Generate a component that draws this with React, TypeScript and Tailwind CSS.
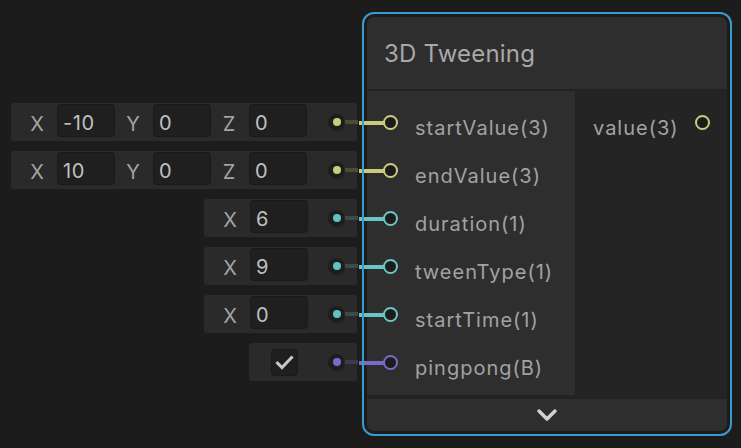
import React from "react";

type Color = { dot: string; dim: string; bright: string };
const YELLOW: Color = { dot: "bg-[#c9cd7b]", dim: "bg-[#4b4d3b]", bright: "bg-[#c9cd7b]" };
const TEAL: Color = { dot: "bg-[#62c2c3]", dim: "bg-[#394b4b]", bright: "bg-[#68c6c6]" };
const PURPLE: Color = { dot: "bg-[#7b69c9]", dim: "bg-[#3e3a4e]", bright: "bg-[#7b69c9]" };

function Dot({ c }: { c: Color }) {
  return (
    <div className="relative w-[17px] h-[17px] shrink-0">
      <div className={`absolute left-[8px] top-[6px] w-[22px] h-[4px] ${c.dim}`} />
      <div className="absolute inset-0 rounded-full bg-[#1d1d1d] flex items-center justify-center">
        <div className={`w-[8px] h-[8px] rounded-full ${c.dot}`} />
      </div>
    </div>
  );
}

function Field({ label, value }: { label: string; value: string }) {
  return (
    <div className="flex items-start w-[96px] h-full">
      <div className="w-[38px] h-full flex items-center justify-center text-[20px] text-[#a4a4a4] pt-[4px] pr-[2px]">
        {label}
      </div>
      <div className="w-[58px] h-[33px] mt-[1px] rounded-[4px] bg-[#1f1f1f] border border-[#1a1a1a] flex items-center pl-[5px] pt-[5px] text-[20px] tracking-[0.6px] text-[#c0c0c0]">
        {value}
      </div>
    </div>
  );
}

function FieldBox({ width, children, c }: { width: string; children: React.ReactNode; c: Color }) {
  return (
    <div className={`${width} h-[38px] rounded-[3px] bg-[#2a2a2a] flex items-center pl-[8px] pr-[12px]`}>
      <div className="flex h-full flex-1">{children}</div>
      <Dot c={c} />
    </div>
  );
}

function InPort({ label, c, stroke }: { label: string; c: Color; stroke: string }) {
  return (
    <div className="relative h-[48px] flex items-center pl-[16px]">
      <div className={`absolute left-[-8px] top-[22px] w-[26px] h-[4px] ${c.bright}`} />
      <div className={`relative w-[15px] h-[15px] rounded-full border-2 ${stroke} bg-[#1c1c1c] mb-[1px]`} />
      <div className="ml-[17px] pt-[9px] text-[20px] tracking-[1px] text-[#a2a2a2]">{label}</div>
    </div>
  );
}

export default function App() {
  return (
    <div className="w-[741px] h-[448px] bg-[#1c1c1c] flex overflow-hidden [font-family:Inter,'Noto_Sans',sans-serif]">
      <div className="w-[357px] shrink-0 flex flex-col items-end gap-[10px] pt-[103px]">
        <FieldBox width="w-[346px]" c={YELLOW}>
          <Field label="X" value="-10" />
          <Field label="Y" value="0" />
          <Field label="Z" value="0" />
        </FieldBox>
        <FieldBox width="w-[346px]" c={YELLOW}>
          <Field label="X" value="10" />
          <Field label="Y" value="0" />
          <Field label="Z" value="0" />
        </FieldBox>
        <FieldBox width="w-[153px]" c={TEAL}>
          <Field label="X" value="6" />
        </FieldBox>
        <FieldBox width="w-[153px]" c={TEAL}>
          <Field label="X" value="9" />
        </FieldBox>
        <FieldBox width="w-[153px]" c={TEAL}>
          <Field label="X" value="0" />
        </FieldBox>
        <div className="w-[108px] h-[38px] rounded-[3px] bg-[#2a2a2a] flex items-center pl-[22px] pr-[12px]">
          <div className="w-[27px] h-[27px] rounded-[4px] bg-[#1f1f1f] border border-[#1a1a1a] flex items-center justify-center">
            <svg width="19" height="15" viewBox="0 0 19 15" fill="none">
              <path d="M2.5 8 L7 12.5 L16.5 2.5" stroke="#c8c8c8" strokeWidth="3" strokeLinecap="square" />
            </svg>
          </div>
          <div className="flex-1" />
          <Dot c={PURPLE} />
        </div>
      </div>

      <div className="relative ml-[5px] mt-[12px] w-[370px] h-[424px] p-[5px] shrink-0">
        <div className="w-[360px] h-[414px] flex flex-col">
          <div className="h-[72px] rounded-t-[7px] bg-[#2e2e2e] flex items-center pl-[17px] pt-[1px] text-[24px] tracking-[0.2px] text-[#a8a8a8]">
            3D Tweening
          </div>
          <div className="h-[2px] bg-[#232323]" />
          <div className="h-[304px] flex">
            <div className="w-[208px] bg-[#2e2e2e] pt-[8px] flex flex-col">
              <InPort label="startValue(3)" c={YELLOW} stroke="border-[#c9cd7b]" />
              <InPort label="endValue(3)" c={YELLOW} stroke="border-[#c9cd7b]" />
              <InPort label="duration(1)" c={TEAL} stroke="border-[#68c6c6]" />
              <InPort label="tweenType(1)" c={TEAL} stroke="border-[#68c6c6]" />
              <InPort label="startTime(1)" c={TEAL} stroke="border-[#68c6c6]" />
              <InPort label="pingpong(B)" c={PURPLE} stroke="border-[#7b69c9]" />
            </div>
            <div className="w-[2px] bg-[#232323]" />
            <div className="flex-1 bg-[#242424] pt-[8px]">
              <div className="h-[48px] flex items-center justify-between pl-[16px] pr-[17px]">
                <div className="pt-[9px] text-[20px] tracking-[1px] text-[#a2a2a2]">value(3)</div>
                <div className="w-[15px] h-[15px] rounded-full border-2 border-[#c9cd7b] bg-[#1c1c1c] mb-[1px]" />
              </div>
            </div>
          </div>
          <div className="h-[4px] bg-[#232323]" />
          <div className="h-[32px] rounded-b-[7px] bg-[#2e2e2e] flex items-center justify-center">
            <svg width="22" height="14" viewBox="0 0 22 14" fill="none">
              <path d="M3 3 L11 11 L19 3" stroke="#d2d2d2" strokeWidth="3.5" strokeLinecap="round" strokeLinejoin="round" />
            </svg>
          </div>
        </div>
        <div className="pointer-events-none absolute inset-0 rounded-[12px] border-2 border-[#3a9bd1]" />
      </div>
    </div>
  );
}
